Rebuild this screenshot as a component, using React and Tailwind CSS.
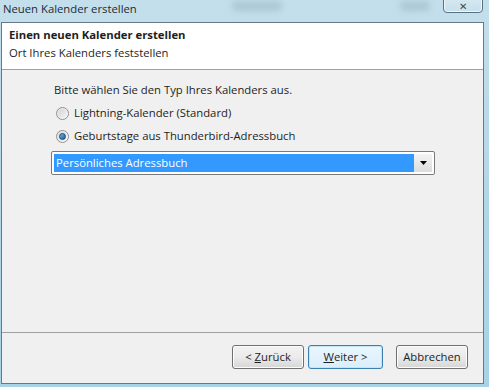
import React from 'react';

function Radio({ checked }) {
  return (
    <span className="relative flex h-[13px] w-[13px] items-center justify-center rounded-full border border-[#8f8f8f] bg-gradient-to-br from-[#e6e6e6] to-[#ffffff]">
      <span className="h-[9px] w-[9px] rounded-full bg-gradient-to-br from-[#d4d4d4] to-[#f4f4f4]">
        {checked && (
          <span className="m-[1px] block h-[7px] w-[7px] rounded-full border border-[#1c4a73] bg-gradient-to-br from-[#6fb8e6] to-[#1f5c96]" />
        )}
      </span>
    </span>
  );
}

function Button({ children, focused }) {
  return (
    <button
      className={
        focused
          ? 'h-[24px] w-[75px] rounded-[3px] border border-[#3c7fb1] bg-gradient-to-b from-[#eaf6fd] to-[#d9eefb] text-[11.3px] text-[#1e1e1e] shadow-[inset_0_0_0_1px_#c4e5f6]'
          : 'h-[24px] w-[72px] rounded-[3px] border border-[#707070] bg-gradient-to-b from-[#f2f2f2] via-[#ebebeb] to-[#d6d6d6] text-[11.3px] text-[#1e1e1e] shadow-[inset_0_0_0_1px_#fcfcfc]'
      }
    >
      {children}
    </button>
  );
}

export default function App() {
  return (
    <div
      className="relative flex h-[387px] w-[489px] flex-col overflow-hidden bg-gradient-to-b from-[#c4dfec] via-[#b3d6e7] to-[#a8d2e6]"
      style={{ fontFamily: '"Segoe UI", "Open Sans", "Noto Sans", sans-serif' }}
    >
      {/* blurred background behind the glass */}
      <span className="absolute left-[232px] top-[1px] h-[10px] w-[50px] rounded bg-[#8aa4b3] opacity-40 blur-[3px]" />
      <span className="absolute left-[400px] top-[1px] h-[10px] w-[30px] rounded bg-[#8aa4b3] opacity-40 blur-[3px]" />

      <div className="relative flex h-[22px] items-center pl-[3px] pb-[4px] text-[11.3px] text-[#1e2a33]">
        Neuen Kalender erstellen
        <div className="absolute right-[6px] top-[-5px] flex h-[18px] w-[40px] items-center justify-center rounded-b-[4px] border border-[#58707f] bg-gradient-to-b from-[#d8eaf2] to-[#c6e0ec] pt-[4px] text-[10px] leading-none text-[#3a4a55] shadow-[inset_0_0_0_1px_#eef7fb]">
          ✕
        </div>
      </div>

      <div className="ml-[1px] mr-[5px] mb-[3px] flex flex-1 flex-col border border-[#6a7883] bg-[#f0f0f0] text-[11.3px] text-[#1e1e1e]">
        <div className="h-[47px] border-b border-[#a0a0a0] bg-white pl-[7px] pt-[3px] leading-[18px]">
          <div className="font-bold">Einen neuen Kalender erstellen</div>
          <div>Ort Ihres Kalenders feststellen</div>
        </div>

        <div className="flex-1 border-b border-[#a0a0a0] pl-[49px] pt-[12px]">
          <div className="pl-[3px] leading-[16px]">Bitte wählen Sie den Typ Ihres Kalenders aus.</div>
          <div className="mt-[7px] flex items-center gap-[5px] pl-[5px] leading-[16px]">
            <Radio />
            <span>Lightning-Kalender (Standard)</span>
          </div>
          <div className="mt-[7px] flex items-center gap-[5px] pl-[5px] leading-[16px]">
            <Radio checked />
            <span>Geburtstage aus Thunderbird-Adressbuch</span>
          </div>
          <div className="mt-[7px] flex h-[24px] w-[384px] items-center rounded-[2px] border border-[#7a7a7a] bg-white p-[2px]">
            <div className="flex h-full flex-1 items-center bg-[#3399ff] pl-[2px] text-white">
              Persönliches Adressbuch
            </div>
            <div className="flex h-full w-[18px] items-center justify-center bg-gradient-to-b from-[#f4f4f4] to-[#dcdcdc]">
              <svg width="7" height="4" viewBox="0 0 7 4">
                <path d="M0 0h7L3.5 4z" fill="#000" />
              </svg>
            </div>
          </div>
        </div>

        <div className="flex h-[50px] items-center justify-end pr-[15px] pb-[2px]">
          <div className="flex gap-[4px]">
            <Button>
              &lt; <span className="underline">Z</span>urück
            </Button>
            <Button focused>
              <span className="underline">W</span>eiter &gt;
            </Button>
          </div>
          <div className="ml-[13px]">
            <Button>Abbrechen</Button>
          </div>
        </div>
      </div>
    </div>
  );
}
